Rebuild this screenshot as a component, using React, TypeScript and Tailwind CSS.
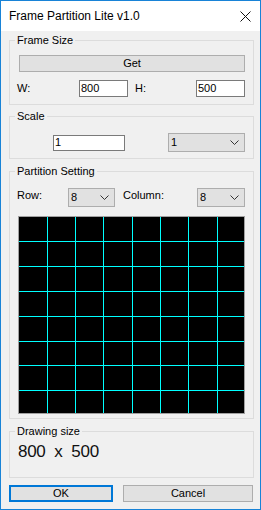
import React from 'react';

function Chevron() {
  return (
    <svg width="9" height="5" viewBox="0 0 9 5" className="shrink-0">
      <polyline points="0.5,0.5 4.5,4.5 8.5,0.5" fill="none" stroke="#333" strokeWidth="1" />
    </svg>
  );
}

function Select({ value, className }: { value: string; className: string }) {
  return (
    <div className={`h-[19px] flex items-center justify-between border border-[#adadad] bg-[#e1e1e1] pl-[2px] pr-[5px] ${className}`}>
      <span>{value}</span>
      <Chevron />
    </div>
  );
}

function TextBox({ value, className }: { value: string; className: string }) {
  return (
    <div className={`flex items-center border border-[#7a7a7a] bg-white pl-[1px] ${className}`}>
      {value}
    </div>
  );
}

function Group({ title, className, children }: { title: string; className: string; children: React.ReactNode }) {
  return (
    <fieldset className={`w-[245px] ml-[8px] border border-[#dcdcdc] ${className}`}>
      <legend className="ml-[5px] px-[2px] leading-[14px]">{title}</legend>
      {children}
    </fieldset>
  );
}

function Grid() {
  const cols = [1, 2, 3, 4, 5, 6, 7];
  return (
    <div className="w-[227px] h-[198px] border border-[#a0a0a0] bg-black">
      <svg width="225" height="196" className="block">
        {cols.map((i) => {
          const x = Math.floor(i * 28.3) + 0.5;
          return <line key={'c' + i} x1={x} y1={0} x2={x} y2={196} stroke="#00ffff" strokeWidth="1" />;
        })}
        {cols.map((i) => {
          const y = Math.floor(i * 24.8) + 0.5;
          return <line key={'r' + i} x1={0} y1={y} x2={225} y2={y} stroke="#00ffff" strokeWidth="1" />;
        })}
      </svg>
    </div>
  );
}

export default function App() {
  return (
    <div className="w-[261px] h-[510px] flex flex-col bg-[#f0f0f0] border border-[#1883d7] text-[11px] text-black font-['Liberation_Sans',Arial,sans-serif] overflow-hidden">
      {/* title bar */}
      <div className="h-[30px] shrink-0 bg-white flex items-center justify-between pl-[8px] pr-[9px]">
        <span className="text-[12px]">Frame Partition Lite v1.0</span>
        <svg width="11" height="11" viewBox="0 0 11 11">
          <path d="M0.5 0.5 L10.5 10.5 M10.5 0.5 L0.5 10.5" stroke="#111" strokeWidth="1" />
        </svg>
      </div>

      <Group title="Frame Size" className="mt-[2px] h-[72px]">
        <div className="pl-[9px] pr-[8px] pt-[8px] flex flex-col gap-[8px]">
          <div className="h-[17px] flex items-center justify-center border border-[#adadad] bg-[#e1e1e1]">Get</div>
          <div className="flex items-center">
            <span className="w-[62px] -ml-[2px]">W:</span>
            <TextBox value="800" className="w-[49px] h-[17px]" />
            <span className="ml-[7px] w-[61px]">H:</span>
            <TextBox value="500" className="w-[49px] h-[17px]" />
          </div>
        </div>
      </Group>

      <Group title="Scale" className="mt-[4px] h-[50px]">
        <div className="pt-[10px] flex items-center">
          <TextBox value="1" className="ml-[43px] w-[72px] h-[16px]" />
          <Select value="1" className="ml-[43px] w-[77px]" />
        </div>
      </Group>

      <Group title="Partition Setting" className="mt-[5px] h-[255px]">
        <div className="pl-[8px] pt-[10px] flex flex-col gap-[9px]">
          <div className="flex items-start">
            <span className="w-[51px] -ml-[1px] -mt-[1px]">Row:</span>
            <Select value="8" className="w-[47px]" />
            <span className="ml-[8px] w-[74px] -mt-[1px]">Column:</span>
            <Select value="8" className="w-[48px]" />
          </div>
          <Grid />
        </div>
      </Group>

      <Group title="Drawing size" className="mt-[5px] h-[54px]">
        <div className="pl-[8px] pt-[4px] text-[17px] leading-[20px] font-light tracking-[-0.3px] text-[#111]">
          800&nbsp; x&nbsp; 500
        </div>
      </Group>

      <div className="mt-[7px] flex pl-[8px] pr-[6px] gap-[10px]">
        <div className="w-[104px] h-[17px] flex items-center justify-center border-2 border-[#0078d7] bg-[#e1e1e1]">OK</div>
        <div className="w-[130px] h-[17px] flex items-center justify-center border border-[#adadad] bg-[#e1e1e1]">Cancel</div>
      </div>
    </div>
  );
}
